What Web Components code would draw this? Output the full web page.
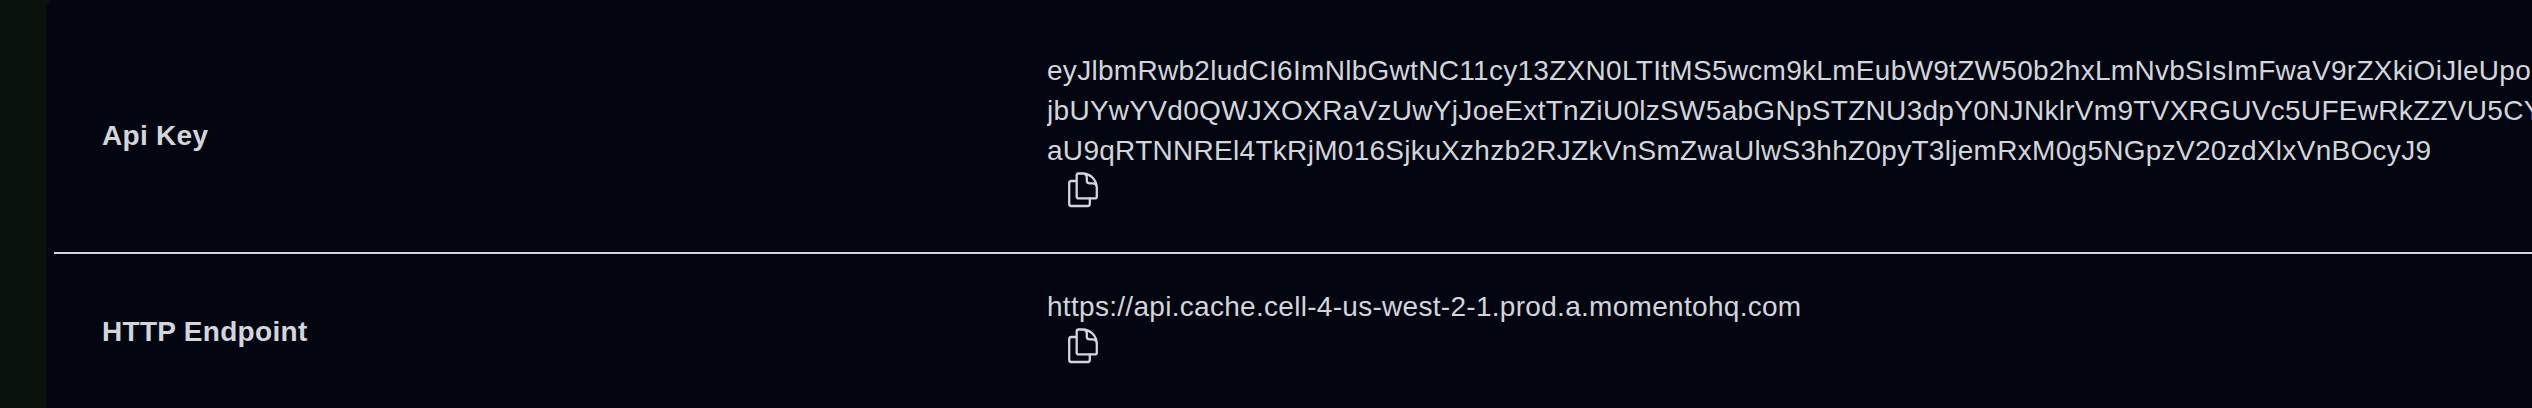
<!DOCTYPE html>
<html lang="en"><head><meta charset="utf-8"><title>Credentials</title>
<style>html,body{margin:0;height:100%;overflow:hidden;background:#0a130b}</style></head>
<body>
<credential-card>
<credential-row label="Api Key"><text-line>eyJlbmRwb2ludCI6ImNlbGwtNC11cy13ZXN0LTItMS5wcm9kLmEubW9tZW50b2hxLmNvbSIsImFwaV9rZXkiOiJleUpo</text-line><text-line>jbUYwYVd0QWJXOXRaVzUwYjJoeExtTnZiU0lzSW5abGNpSTZNU3dpY0NJNklrVm9TVXRGUVc5UFEwRkZZVU5CY</text-line><text-line>aU9qRTNNREl4TkRjM016SjkuXzhzb2RJZkVnSmZwaUlwS3hhZ0pyT3ljemRxM0g5NGpzV20zdXlxVnBOcyJ9</text-line></credential-row>
<credential-row label="HTTP Endpoint"><text-line>https://api.cache.cell-4-us-west-2-1.prod.a.momentohq.com</text-line></credential-row>
</credential-card>
<script>
const define=(name,html,setup)=>customElements.define(name,class extends HTMLElement{
  constructor(){super();this.attachShadow({mode:'open'}).innerHTML=html;}
  connectedCallback(){if(setup)setup(this);}
});
define('text-line',`<style>:host{display:block;height:40px;white-space:pre}</style><slot></slot>`);
define('copy-icon',`<style>:host{display:block;width:30px;height:36px}svg{display:block}</style>
<svg width="30" height="36" viewBox="0 0 30 36" fill="none" stroke="currentColor" stroke-width="2.3" stroke-linejoin="round" stroke-linecap="round"><path d="M8 9H3.2Q1.2 9 1.2 11.2V31.8Q1.2 34 3.2 34H19.8Q21.8 34 21.8 31.8V26.4"/><path d="M10.5 1.5H14.5C22.5 1.5 28.8 8 28.8 16V24.4Q28.8 26.4 26.8 26.4H10.7Q8.7 26.4 8.7 24.4V3.3Q8.7 1.5 10.5 1.5ZM16 1.6Q18.8 2.2 18.8 5.5V8.5Q18.8 11.4 21.7 11.4H24.5Q28 11.4 28.8 14.5"/></svg>`);
define('credential-row',`<style>
:host{display:grid;grid-template-columns:993px 1fr;margin-left:8px;border-bottom:2px solid #d2d5da}
:host(:last-of-type){border-bottom:0}
.label{align-self:center;padding:2px 0 0 48px;font-weight:700}
.value{padding:33px 0 41px;overflow:hidden}
.action{height:40px;padding:1px 0 0 21px;box-sizing:border-box}
</style><div class="label"></div><div class="value"><slot></slot><div class="action"><copy-icon></copy-icon></div></div>`,
el=>el.shadowRoot.querySelector('.label').textContent=el.getAttribute('label'));
define('credential-card',`<style>
:host{display:block;box-sizing:border-box;height:420px;margin:-5px 0 0 46px;padding-top:23px;border-top-left-radius:16px;background:#030611;color:#d2d5da;font:28px/40px "Liberation Sans",Arial,sans-serif;letter-spacing:.295px;overflow:hidden}
</style><slot></slot>`);
</script>
</body></html>
